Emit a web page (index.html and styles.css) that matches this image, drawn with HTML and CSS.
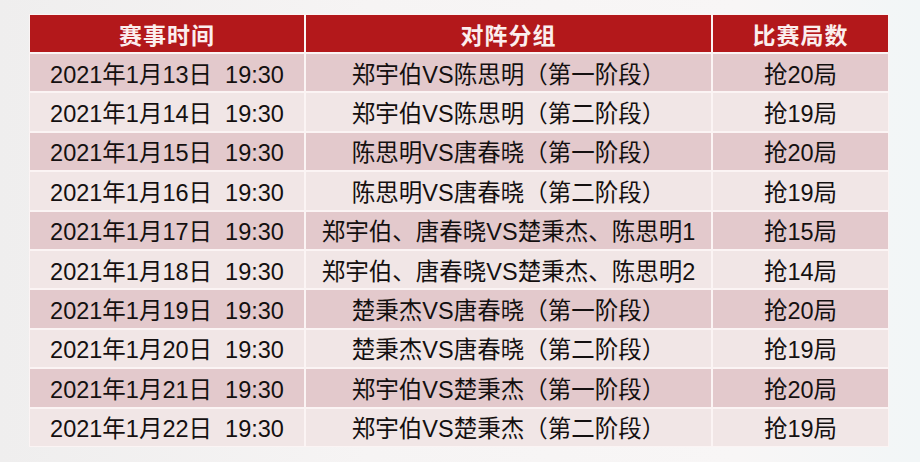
FILE: index.html
```html
<!DOCTYPE html>
<html lang="zh">
<head>
<meta charset="utf-8">
<link rel="stylesheet" href="styles.css">
</head>
<body>
<div class="page">
  <div class="schedule">
    <div class="cell head">赛事时间</div>
    <div class="cell head">对阵分组</div>
    <div class="cell head">比赛局数</div>

    <div class="cell odd">2021年1月13日&nbsp; 19:30</div>
    <div class="cell odd">郑宇伯VS陈思明（第一阶段）</div>
    <div class="cell odd">抢20局</div>

    <div class="cell even">2021年1月14日&nbsp; 19:30</div>
    <div class="cell even">郑宇伯VS陈思明（第二阶段）</div>
    <div class="cell even">抢19局</div>

    <div class="cell odd">2021年1月15日&nbsp; 19:30</div>
    <div class="cell odd">陈思明VS唐春晓（第一阶段）</div>
    <div class="cell odd">抢20局</div>

    <div class="cell even">2021年1月16日&nbsp; 19:30</div>
    <div class="cell even">陈思明VS唐春晓（第二阶段）</div>
    <div class="cell even">抢19局</div>

    <div class="cell odd">2021年1月17日&nbsp; 19:30</div>
    <div class="cell odd">郑宇伯、唐春晓VS楚秉杰、陈思明1</div>
    <div class="cell odd">抢15局</div>

    <div class="cell even">2021年1月18日&nbsp; 19:30</div>
    <div class="cell even">郑宇伯、唐春晓VS楚秉杰、陈思明2</div>
    <div class="cell even">抢14局</div>

    <div class="cell odd">2021年1月19日&nbsp; 19:30</div>
    <div class="cell odd">楚秉杰VS唐春晓（第一阶段）</div>
    <div class="cell odd">抢20局</div>

    <div class="cell even">2021年1月20日&nbsp; 19:30</div>
    <div class="cell even">楚秉杰VS唐春晓（第二阶段）</div>
    <div class="cell even">抢19局</div>

    <div class="cell odd">2021年1月21日&nbsp; 19:30</div>
    <div class="cell odd">郑宇伯VS楚秉杰（第一阶段）</div>
    <div class="cell odd">抢20局</div>

    <div class="cell even">2021年1月22日&nbsp; 19:30</div>
    <div class="cell even">郑宇伯VS楚秉杰（第二阶段）</div>
    <div class="cell even">抢19局</div>
  </div>
</div>
</body>
</html>
```
FILE: styles.css
```css
html, body {
  margin: 0;
  padding: 0;
}
body {
  width: 920px;
  height: 462px;
  overflow: hidden;
  background: linear-gradient(90deg, #efeeee 0%, #f6f4f4 40%, #f8f6f6 80%, #f2f6f7 100%);
  font-family: "Liberation Sans", "Noto Sans CJK SC", sans-serif;
}
.page {
  padding: 14px 0 0 29px;
}
.schedule {
  width: 858px;
  display: grid;
  grid-template-columns: 274px 405px 175px;
  grid-template-rows: 37px repeat(10, 37.4px);
  gap: 2px;
  padding: 1px;
  background: #fbf4f4;
}
.cell {
  display: flex;
  align-items: center;
  justify-content: center;
  font-size: 23.5px;
  color: #141010;
  white-space: nowrap;
}
.head {
  background: #b3181b;
  color: #fbeeee;
  font-family: "Noto Sans CJK SC", sans-serif;
  font-weight: 700;
  font-size: 23px;
  letter-spacing: 1px;
}
.odd {
  background: #e3c9cc;
}
.even {
  background: #f1e6e6;
}
```
